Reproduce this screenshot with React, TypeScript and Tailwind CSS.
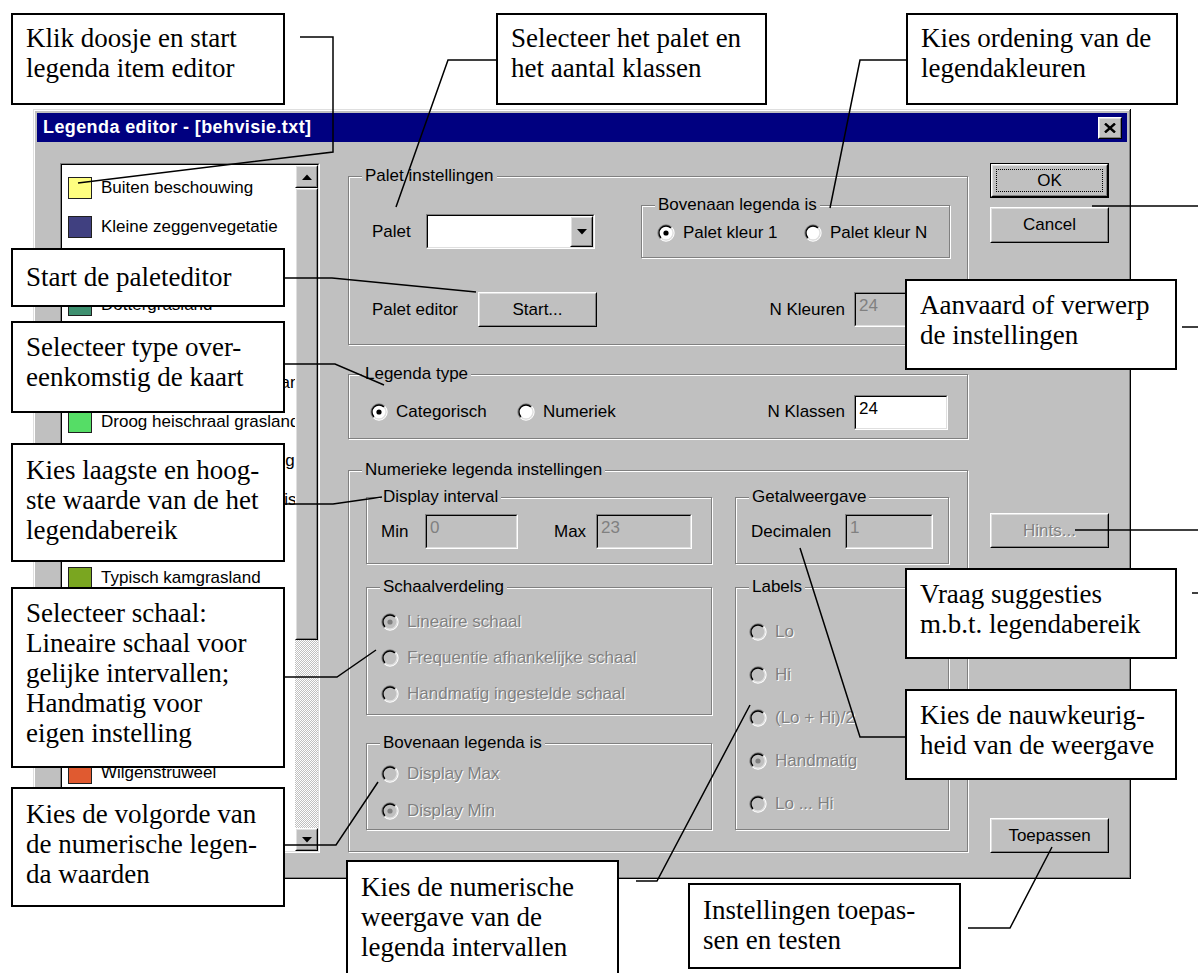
import React from "react"

const SERIF = "font-['Liberation_Serif','Times_New_Roman',serif]"
const DIS = "text-[#808080] [text-shadow:1px_1px_0_#fff]"

type Item = { name: string; swatch: string }

const items: Item[] = [
  { name: "Buiten beschouwing", swatch: "bg-[#ffff80]" },
  { name: "Kleine zeggenvegetatie", swatch: "bg-[#404080]" },
  { name: "Grote zeggenvegetatie", swatch: "bg-[#8080c0]" },
  { name: "Dottergrasland", swatch: "bg-[#3f9070]" },
  { name: "Natte heide", swatch: "bg-[#a0a0ff]" },
  { name: "Vochtig heischraal grasland", swatch: "bg-[#80e0a0]" },
  { name: "Droog heischraal grasland", swatch: "bg-[#55dd66]" },
  { name: "Blauwgrasland en vochtig hooiland", swatch: "bg-[#c0e080]" },
  { name: "Glanshaverhooiland basisch", swatch: "bg-[#e0e060]" },
  { name: "Zilverschoongrasland", swatch: "bg-[#60c0c0]" },
  { name: "Typisch kamgrasland", swatch: "bg-[#7aa620]" },
  { name: "Ruigte", swatch: "bg-[#c08040]" },
  { name: "Moerasruigte", swatch: "bg-[#a06040]" },
  { name: "Bosrand", swatch: "bg-[#408040]" },
  { name: "Struweel", swatch: "bg-[#806020]" },
  { name: "Wilgenstruweel", swatch: "bg-[#e05a30]" },
  { name: "Loofbos", swatch: "bg-[#206020]" },
  { name: "Naaldbos", swatch: "bg-[#104010]" },
]

function Radio({ checked, disabled }: { checked?: boolean; disabled?: boolean }) {
  return (
    <svg width="18" height="18" viewBox="0 0 18 18" className="shrink-0">
      <circle cx="9" cy="9" r="7.2" fill={disabled ? "#c0c0c0" : "#fff"} />
      <path d="M3.34 14.66A8 8 0 0 1 14.66 3.34" fill="none" stroke="#808080" strokeWidth="1.3" />
      <path d="M14.66 3.34A8 8 0 0 1 3.34 14.66" fill="none" stroke="#fff" strokeWidth="1.3" />
      <path d="M4.05 13.95A7 7 0 0 1 13.95 4.05" fill="none" stroke="#000" strokeWidth="1.3" />
      <path d="M13.95 4.05A7 7 0 0 1 4.05 13.95" fill="none" stroke="#dfdfdf" strokeWidth="1.3" />
      {checked && <circle cx="9" cy="9" r="2.6" fill={disabled ? "#808080" : "#000"} />}
    </svg>
  )
}

function Option({
  label,
  checked,
  disabled,
  className = "",
}: {
  label: string
  checked?: boolean
  disabled?: boolean
  className?: string
}) {
  return (
    <div className={`flex items-center gap-[8px] ${className}`}>
      <Radio checked={checked} disabled={disabled} />
      <span className={disabled ? DIS : ""}>{label}</span>
    </div>
  )
}

function Group({
  title,
  className = "",
  children,
}: {
  title: string
  className?: string
  children?: React.ReactNode
}) {
  return (
    <div className={`relative border border-[#808080] shadow-[inset_1px_1px_0_#fff,1px_1px_0_#fff] ${className}`}>
      <span className="absolute -top-[11px] left-[13px] bg-[#c0c0c0] px-[3px] leading-[20px]">{title}</span>
      {children}
    </div>
  )
}

function Edit({ value, disabled, className = "" }: { value: string; disabled?: boolean; className?: string }) {
  return (
    <div className={`h-[35px] border border-t-[#808080] border-l-[#808080] border-r-white border-b-white ${className}`}>
      <div
        className={`h-full border border-t-black border-l-black border-r-[#dfdfdf] border-b-[#dfdfdf] px-[3px] pt-[2px] leading-[20px] ${
          disabled ? "bg-[#c0c0c0] text-[#808080]" : "bg-white text-black"
        }`}
      >
        {value}
      </div>
    </div>
  )
}

function Raised({ className = "", children }: { className?: string; children?: React.ReactNode }) {
  return (
    <div className={`border border-t-white border-l-white border-r-black border-b-black bg-[#c0c0c0] ${className}`}>
      <div className="flex h-full items-center justify-center border border-t-[#dfdfdf] border-l-[#dfdfdf] border-r-[#808080] border-b-[#808080]">
        {children}
      </div>
    </div>
  )
}

function Btn({ label, disabled, className = "" }: { label: string; disabled?: boolean; className?: string }) {
  return (
    <Raised className={className}>
      <span className={disabled ? DIS : ""}>{label}</span>
    </Raised>
  )
}

function DownArrow() {
  return (
    <svg width="10" height="6" viewBox="0 0 10 6">
      <polygon points="0,0 10,0 5,5.5" fill="#000" />
    </svg>
  )
}

function UpArrow() {
  return (
    <svg width="10" height="6" viewBox="0 0 10 6">
      <polygon points="0,6 10,6 5,0.5" fill="#000" />
    </svg>
  )
}

function Combo() {
  return (
    <div className="h-[35px] w-[169px] border border-t-[#808080] border-l-[#808080] border-r-white border-b-white">
      <div className="flex h-full justify-end border border-t-black border-l-black border-r-[#dfdfdf] border-b-[#dfdfdf] bg-white">
        <Raised className="h-full w-[23px]">
          <DownArrow />
        </Raised>
      </div>
    </div>
  )
}

function Callout({ lines, className }: { lines: string[]; className: string }) {
  return (
    <div
      className={`absolute whitespace-nowrap border-2 border-black bg-white pl-[13px] text-[27px] leading-[30px] text-black ${SERIF} ${className}`}
    >
      {lines.map((l) => (
        <div key={l}>{l}</div>
      ))}
    </div>
  )
}

function LegendList() {
  return (
    <div className="ml-[23px] mt-[21px] flex h-[690px] w-[260px] border border-t-[#808080] border-l-[#808080] border-r-white border-b-white">
      <div className="flex min-w-0 flex-1 border border-t-black border-l-black border-r-[#dfdfdf] border-b-[#dfdfdf] bg-white">
        <div className="min-w-0 flex-1 overflow-hidden pt-[3px]">
          {items.map((it) => (
            <div key={it.name} className="flex h-[39px] items-center whitespace-nowrap pl-[6px]">
              <div className={`mr-[9px] h-[22px] w-[24px] shrink-0 border border-[#202020] ${it.swatch}`} />
              <span>{it.name}</span>
            </div>
          ))}
        </div>
        <div className="flex w-[23px] flex-col">
          <Raised className="h-[23px]">
            <UpArrow />
          </Raised>
          <Raised className="h-[452px]" />
          <div className="flex-1 [background-image:repeating-conic-gradient(#ffffff_0%_25%,#c0c0c0_0%_50%)] [background-size:2px_2px]" />
          <Raised className="h-[23px]">
            <DownArrow />
          </Raised>
        </div>
      </div>
    </div>
  )
}

function Dialog() {
  return (
    <div className="absolute left-[33px] top-[109px] h-[770px] w-[1098px] bg-[#c0c0c0] p-[4px] font-['Liberation_Sans',Arial,sans-serif] text-[17px] text-black shadow-[inset_-1px_-1px_0_#000,inset_1px_1px_0_#dfdfdf,inset_-2px_-2px_0_#808080,inset_2px_2px_0_#fff]">
      {/* title bar */}
      <div className="flex h-[29px] items-center justify-between bg-[#000080] pl-[6px] pr-[5px]">
        <span className="text-[18px] font-bold tracking-[0.4px] text-white">Legenda editor - [behvisie.txt]</span>
        <Raised className="h-[22px] w-[24px]">
          <svg width="12" height="10" viewBox="0 0 12 10">
            <path d="M1 0.5L11 9.5M11 0.5L1 9.5" stroke="#000" strokeWidth="2.4" />
          </svg>
        </Raised>
      </div>

      <div className="flex items-start">
        <LegendList />

        {/* settings */}
        <div className="ml-[28px] flex w-[620px] flex-col">
          <Group title="Palet instellingen" className="mt-[34px] h-[169px]">
            <div className="mt-[28px] flex h-[53px] items-center pl-[23px] pr-[17px]">
              <span className="w-[54px]">Palet</span>
              <Combo />
              <Group title="Bovenaan legenda is" className="ml-auto flex h-[53px] w-[309px] items-center pl-[15px] pt-[3px]">
                <Option label="Palet kleur 1" checked className="w-[147px]" />
                <Option label="Palet kleur N" />
              </Group>
            </div>
            <div className="mt-[34px] flex h-[35px] items-center pl-[23px] pr-[19px]">
              <span className="w-[106px]">Palet editor</span>
              <Btn label="Start..." className="h-[35px] w-[119px]" />
              <span className="ml-auto mr-[9px]">N Kleuren</span>
              <Edit value="24" disabled className="w-[94px]" />
            </div>
          </Group>

          <Group title="Legenda type" className="mt-[29px] h-[65px]">
            <div className="mt-[20px] flex h-[34px] items-center pl-[21px] pr-[19px]">
              <Option label="Categorisch" checked className="w-[147px]" />
              <Option label="Numeriek" />
              <span className="ml-auto mr-[9px]">N Klassen</span>
              <Edit value="24" className="w-[94px]" />
            </div>
          </Group>

          <Group title="Numerieke legenda instellingen" className="mt-[31px] flex h-[382px] pl-[17px] pr-[18px]">
            <div className="flex w-[346px] flex-col">
              <Group title="Display interval" className="mt-[26px] h-[67px]">
                <div className="mt-[16px] flex h-[35px] items-center pl-[14px]">
                  <span className="w-[44px]">Min</span>
                  <Edit value="0" disabled className="w-[93px]" />
                  <span className="ml-[36px] w-[42px]">Max</span>
                  <Edit value="23" disabled className="w-[96px]" />
                </div>
              </Group>
              <Group title="Schaalverdeling" className="mt-[23px] h-[128px] pl-[14px] pt-[16px]">
                <Option label="Lineaire schaal" checked disabled className="h-[36px]" />
                <Option label="Frequentie afhankelijke schaal" disabled className="h-[36px]" />
                <Option label="Handmatig ingestelde schaal" disabled className="h-[36px]" />
              </Group>
              <Group title="Bovenaan legenda is" className="mt-[28px] h-[87px] pl-[14px] pt-[11px]">
                <Option label="Display Max" disabled className="h-[37px]" />
                <Option label="Display Min" checked disabled className="h-[37px]" />
              </Group>
            </div>
            <div className="ml-auto flex w-[214px] flex-col">
              <Group title="Getalweergave" className="mt-[26px] h-[67px]">
                <div className="mt-[16px] flex h-[35px] items-center pl-[15px]">
                  <span className="w-[94px]">Decimalen</span>
                  <Edit value="1" disabled className="w-[88px]" />
                </div>
              </Group>
              <Group title="Labels" className="mt-[23px] h-[243px] pl-[13px] pt-[22px]">
                <Option label="Lo" disabled className="h-[43px]" />
                <Option label="Hi" disabled className="h-[43px]" />
                <Option label="(Lo + Hi)/2" disabled className="h-[43px]" />
                <Option label="Handmatig" checked disabled className="h-[43px]" />
                <Option label="Lo ... Hi" disabled className="h-[43px]" />
              </Group>
            </div>
          </Group>
        </div>

        {/* buttons */}
        <div className="ml-[22px] flex w-[119px] flex-col">
          <div className="mt-[21px] h-[35px] border border-black">
            <Raised className="relative h-full">
              <div className="absolute inset-[4px] border border-dotted border-black" />
              <span>OK</span>
            </Raised>
          </div>
          <Btn label="Cancel" className="mt-[9px] h-[36px]" />
          <Btn label="Hints..." disabled className="mt-[270px] h-[35px]" />
          <Btn label="Toepassen" className="mt-[270px] h-[35px]" />
        </div>
      </div>
    </div>
  )
}

export default function App() {
  return (
    <div className="relative h-[973px] w-[1198px] overflow-hidden bg-white">
      <Dialog />

      <svg className="pointer-events-none absolute inset-0" width="1198" height="973" viewBox="0 0 1198 973" fill="none" stroke="#000" strokeWidth="1.5">
        <path d="M300 37H333V152L78 183" />
        <path d="M496 60H448L396 207" />
        <path d="M906 60H860L830 208" />
        <path d="M285 278H332L476 292" />
        <path d="M285 364H335L384 385" />
        <path d="M285 504H333L382 497" />
        <path d="M285 677H337L376 650" />
        <path d="M285 845H336L378 782" />
        <path d="M636 881H657L750 705" />
        <path d="M905 737H860L800 548" />
        <path d="M968 928H1010L1052 847" />
        <path d="M1092 206H1198" />
        <path d="M1182 327H1198" />
        <path d="M1075 530H1198" />
        <path d="M1192 593H1198" />
      </svg>

      <Callout className="left-[11px] top-[13px] h-[92px] w-[274px] pt-[8px]" lines={["Klik doosje en start", "legenda item editor"]} />
      <Callout className="left-[496px] top-[13px] h-[92px] w-[271px] pt-[8px]" lines={["Selecteer het palet en", "het aantal klassen"]} />
      <Callout className="left-[906px] top-[13px] h-[92px] w-[272px] pt-[8px]" lines={["Kies ordening van de", "legendakleuren"]} />
      <Callout className="left-[11px] top-[248px] h-[59px] w-[274px] pt-[12px]" lines={["Start de paleteditor"]} />
      <Callout className="left-[11px] top-[321px] h-[92px] w-[274px] pt-[9px]" lines={["Selecteer type over-", "eenkomstig de kaart"]} />
      <Callout className="left-[11px] top-[443px] h-[119px] w-[274px] pt-[10px]" lines={["Kies laagste en hoog-", "ste waarde van de het", "legendabereik"]} />
      <Callout
        className="left-[11px] top-[587px] h-[181px] w-[274px] pt-[9px]"
        lines={["Selecteer schaal:", "Lineaire schaal voor", "gelijke intervallen;", "Handmatig voor", "eigen instelling"]}
      />
      <Callout className="left-[11px] top-[787px] h-[120px] w-[274px] pt-[10px]" lines={["Kies de volgorde van", "de numerische legen-", "da waarden"]} />
      <Callout className="left-[905px] top-[279px] h-[91px] w-[272px] pt-[9px]" lines={["Aanvaard of verwerp", "de instellingen"]} />
      <Callout className="left-[905px] top-[568px] h-[91px] w-[272px] pt-[9px]" lines={["Vraag suggesties", "m.b.t. legendabereik"]} />
      <Callout className="left-[905px] top-[689px] h-[91px] w-[272px] pt-[9px]" lines={["Kies de nauwkeurig-", "heid van de weergave"]} />
      <Callout className="left-[346px] top-[860px] h-[130px] w-[273px] pt-[10px]" lines={["Kies de numerische", "weergave van de", "legenda intervallen"]} />
      <Callout className="left-[688px] top-[883px] h-[86px] w-[273px] pt-[10px]" lines={["Instellingen toepas-", "sen en testen"]} />
    </div>
  )
}
